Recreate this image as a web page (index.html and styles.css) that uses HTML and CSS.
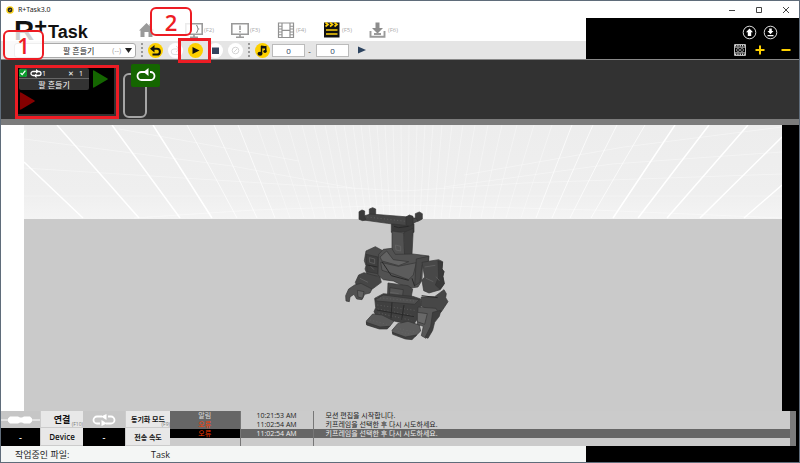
FILE: index.html
```html
<!DOCTYPE html>
<html lang="ko">
<head>
    <meta charset="UTF-8">
    <meta name="viewport" content="width=device-width, initial-scale=1.0">
    <title>R+Task3.0</title>
    <link rel="stylesheet" href="styles.css">
</head>
<body>
    <div class="window">
        <div class="titlebar">
            <svg class="app-icon" width="8" height="8" viewBox="0 0 8 8"><circle cx="4" cy="4" r="3.8" fill="#f5cf1b"/><circle cx="4" cy="4" r="2.4" fill="#222"/><path d="M3 4.5l2-1" stroke="#f5cf1b" stroke-width=".8"/></svg>
            <span class="app-title">R+Task3.0</span>
            <button class="win-btn" aria-label="Minimize"><svg width="8" height="8" viewBox="0 0 8 8"><path d="M1 4.5h6"/></svg></button>
            <button class="win-btn" aria-label="Maximize"><svg width="8" height="8" viewBox="0 0 8 8"><path d="M1.500 1.500h5v5h-5z"/></svg></button>
            <button class="win-btn" aria-label="Close"><svg width="8" height="8" viewBox="0 0 8 8"><path d="M1 1l6 6M7 1l-6 6"/></svg></button>
        </div>

        <div class="header">
            <div class="header-main">
                <div class="nav">
                    <div class="logo"><span class="logo-r">R</span><span class="logo-plus">+</span><span class="logo-task">Task</span></div>
                    <button class="nav-btn" aria-label="Home"><svg width="18" height="16" viewBox="0 0 18 16"><path d="M0 8.500L7.500 1l3 3V2h2v4l3 2.500h-2V15H9.500v-5h-4v5h-4V8.500z" fill="#9a9a9a"/></svg></button>
                    <button class="nav-btn"><svg width="18" height="16" viewBox="0 0 18 16"><path d="M.8 1.800h16.400v10.400H.8zM5 15.200h8M9 12v3" fill="none" stroke="#9a9a9a" stroke-width="1.600"/><path d="M11 3.500q1.500 0 1.500 1.500t1 2q-1 .5-1 2T11 10.500" fill="none" stroke="#8d8d8d" stroke-width="1.100"/></svg><span>(F2)</span></button>
                    <button class="nav-btn"><svg width="18" height="16" viewBox="0 0 18 16"><path d="M.8 1.800h16.400v10.400H.8zM5 15.200h8M9 12v3" fill="none" stroke="#9a9a9a" stroke-width="1.600"/><path d="M9 3.500v4.500M9 9v1.500" stroke="#8d8d8d" stroke-width="1.400"/></svg><span>(F3)</span></button>
                    <button class="nav-btn"><svg width="18" height="16" viewBox="0 0 18 16"><path d="M1.500 1h15v14.500h-15zM5 1v14.500M13 1v14.500M5 8.300h8" fill="none" stroke="#929292" stroke-width="1.200"/><path d="M1.500 4.200H5M1.500 7H5M1.500 10H5M1.500 12.800H5M13 4.200h3.500M13 7h3.500M13 10h3.500M13 12.800h3.500" stroke="#929292" stroke-width="1.100"/></svg><span>(F4)</span></button>
                    <button class="nav-btn"><svg width="18" height="16" viewBox="0 0 18 16"><path d="M1 .5h15.500V15.500H1z" fill="#111"/><path d="M2.500 .5l2.500 2-2.500 2M7 .5l2.500 2-2.500 2M11.500 .5l2.500 2-2.500 2M3 8h11.500M3 12h11.500" fill="none" stroke="#fdcf0a" stroke-width="1.700"/></svg><span>(F5)</span></button>
                    <button class="nav-btn"><svg width="18" height="16" viewBox="0 0 18 16"><path d="M6.500 .5h4V6h3.500l-5.500 5.500L3 6h3.500z" fill="#8d8d8d"/><path d="M1.500 9v5.700h14V9M5 12h7" fill="none" stroke="#9a9a9a" stroke-width="1.900"/></svg><span>(F6)</span></button>
                </div>
                <div class="toolbar">
                    <div class="motion-select">
                        <select aria-label="모션">
                            <option>팔 흔들기</option>
                        </select>
                        <span class="motion-key">(--)</span>
                        <svg width="7" height="5" viewBox="0 0 7 5"><path d="M0 0h7L3.500 5z" fill="#222"/></svg>
                    </div>
                    <span class="separator"></span>
                    <div class="tools">
                        <button class="tool active" aria-label="Undo"><svg width="13" height="13" viewBox="0 0 13 13"><path d="M5.500 1L1 4.700l4.500 3.700V5.800H8a1.900 1.900 0 010 3.800H3.500v2H8A3.900 3.900 0 008 3.800H5.500z" fill="#111"/></svg></button>
                        <button class="tool" aria-label="Redo"><svg width="13" height="13" viewBox="0 0 13 13"><path d="M7 2l3.500 3L7 8M10 5H5a2.500 2.500 0 000 5.500h4" fill="none" stroke="#ddd"/></svg></button>
                        <button class="tool active" aria-label="Play"><svg width="13" height="13" viewBox="0 0 13 13"><path d="M3.500 3l7 3.500-7 3.500z" fill="#111"/></svg></button>
                        <button class="tool" aria-label="Stop"><svg width="13" height="13" viewBox="0 0 13 13"><path d="M3 3.500h7v6.500H3z" fill="#35455f"/></svg></button>
                        <button class="tool" aria-label="Clear"><svg width="13" height="13" viewBox="0 0 13 13"><circle cx="6.500" cy="6.500" r="3.300" fill="none" stroke="#d4d4d4"/><path d="M5 8l3-3" stroke="#d4d4d4"/></svg></button>
                    </div>
                    <span class="separator"></span>
                    <button class="tool active" aria-label="Music"><svg width="13" height="13" viewBox="0 0 13 13"><path d="M5.500 9.500V2" fill="none" stroke="#111" stroke-width="1.500"/><path d="M5 1.500q3 .8 5.500.3V7.500H9V4.500q-2 .3-3.500-.2z" fill="#111"/><ellipse cx="4" cy="9.700" rx="2.500" ry="2" fill="#111"/><ellipse cx="9" cy="7.500" rx="1.700" ry="1.400" fill="#111"/></svg></button>
                    <input class="range-input" type="text" value="0" aria-label="Start">
                    <span class="dash">-</span>
                    <input class="range-input" type="text" value="0" aria-label="End">
                    <button class="tool plain" aria-label="Play music"><svg width="8" height="8" viewBox="0 0 8 8"><path d="M0 .5L8 4 0 7.500z" fill="#2d4460"/></svg></button>
                </div>
            </div>
            <div class="header-side">
                <div class="side-row side-top">
                    <button class="side-btn" aria-label="Upload"><svg width="15" height="15" viewBox="0 0 15 15"><circle cx="7.500" cy="7.500" r="6.300" fill="none" stroke="#ddd"/><path d="M7.500 3.500L11 7.300H9.200V11H5.800V7.300H4z" fill="#fff"/></svg></button>
                    <button class="side-btn" aria-label="Download"><svg width="15" height="15" viewBox="0 0 15 15"><circle cx="7.500" cy="7.500" r="6.300" fill="none" stroke="#ddd"/><path d="M6.200 3.500h2.600V6h1.700l-3 3.200-3-3.200h1.700zM4.500 10h6v1.200h-6z" fill="#fff"/></svg></button>
                </div>
                <div class="side-row side-bottom">
                    <button class="side-btn" aria-label="Frames"><svg width="12" height="12" viewBox="0 0 12 12"><path d="M.5 .5h11v11H.5zM.5 3.200h11M.5 8.800h11" fill="none" stroke="#bbb"/><path d="M1 1.800h10M1 10.200h10" stroke="#ddd" stroke-width="1.500" stroke-dasharray="1.300 1"/><circle cx="4" cy="6" r="1.500" fill="none" stroke="#aaa" stroke-width=".8"/><circle cx="8" cy="6" r="1.500" fill="none" stroke="#aaa" stroke-width=".8"/></svg></button>
                    <button class="side-btn" aria-label="Add"><svg width="10" height="10" viewBox="0 0 10 10"><path d="M5 .5v9M.5 5h9" stroke="#fdd000" stroke-width="2"/></svg></button>
                    <button class="side-btn" aria-label="Remove"><svg width="10" height="10" viewBox="0 0 10 10"><path d="M.5 5h9" stroke="#fdd000" stroke-width="2"/></svg></button>
                </div>
            </div>
        </div>

        <div class="timeline">
            <div class="card">
                <div class="card-info">
                    <div class="card-row">
                        <input type="checkbox" id="use-motion" checked>
                        <svg width="12" height="9" viewBox="0 0 12 9"><path d="M4 6.500H3a2 2 0 010-4h5M8 2.500h1a2 2 0 010 4H5" fill="none" stroke="#fff" stroke-width="1.300"/><path d="M6 0l3 2.500L6 4.500zM6.500 4.500l-3 2 3 2.500z" fill="#fff"/></svg>
                        <span>1</span>
                        <span class="times">✕</span>
                        <span class="count">1</span>
                    </div>
                    <label class="card-title" for="use-motion">팔 흔들기</label>
                </div>
                <svg class="play-green" width="15" height="18" viewBox="0 0 15 18"><path d="M0 1q0-1 1-.6L14.500 8.500q.7.500 0 1L1 17.600Q0 18 0 17z" fill="#146600"/></svg>
                <svg class="play-red" width="15" height="18" viewBox="0 0 15 18"><path d="M0 1q0-1 1-.6L14.500 8.500q.7.500 0 1L1 17.600Q0 18 0 17z" fill="#850000"/></svg>
            </div>
            <div class="loop">
                <button class="loop-btn" aria-label="Loop"><svg width="20" height="16" viewBox="0 0 20 16"><path d="M9 4H5.500a4 4 0 000 8h9a4 4 0 000-8H14" fill="none" stroke="#fff" stroke-width="1.800"/><path d="M12.500 0v8L7.500 4z" fill="#fff"/></svg></button>
            </div>
        </div>
        <div class="splitter"></div>

        <div class="stage">
            <svg class="scene" viewBox="0 0 758 286" preserveAspectRatio="xMidYMin slice">
                <defs>
                    <linearGradient id="wall" x1="0" y1="0" x2="0" y2="1">
                        <stop offset="0" stop-color="#ededed"/>
                        <stop offset=".75" stop-color="#efefef"/>
                        <stop offset="1" stop-color="#f4f4f4"/>
                    </linearGradient>
                </defs>
                <rect width="758" height="286" fill="#cacaca"/>
                <rect width="758" height="94" fill="url(#wall)"/>
                <!-- wall grid -->
                <g fill="none" stroke="#fff">
                    <path stroke-width="1.500" d="M0 37L59 93M33 0l82 93M88 0l68 93M129 0l59 93M758 12l-82 81M758 60l-38 33M724 0l-81 93M685 0l-71 93M651 0l-62 93"/>
                    <path stroke-opacity=".7" d="M163 0l50 93M190 0l43 93M214 0l37 93M621 0l-54 93M593 0l-47 93M569 0l-41 93M548 0l-36 93"/>
                    <path stroke-opacity=".35" d="M233 0l33 93M249 0l31 93M264 0l27 93M278 0l24 93M290 0l22 93M301 0l19 93M311 0l17 93M320 0l15 93M329 0l13 93M337 0l11 93M345 0l9 93M353 0l7 93M361 0l5 93M369 0l3 93M377 0l1 93M385 0l-1 93M393 0l-3 93M401 0l-5 93M409 0l-7 93M418 0l-8 93M428 0l-11 93M439 0l-14 93M451 0l-16 93M464 0l-18 93M478 0l-21 93M493 0l-24 93M510 0l-28 93M528 0l-31 93"/>
                    <path stroke-opacity=".35" d="M0 14l208 27 120 22M95 4l180 32M0 43l270 17 110 6M0 71h758M110 93l120-8 150-5 190 5 188 8M758 27L588 39 420 62M758 49L500 58 380 66M758 2L600 22 440 50"/>
                </g>
                <!-- robot -->
                <g transform="translate(306 70) scale(.3333)" stroke="#343434" stroke-width="2" stroke-linejoin="round">
                    <!-- head plate -->
                    <path fill="#3a3a3a" d="M184 86H252V112H184z"/>
                    <path fill="#3f3f3f" d="M118 60V42L128 38 137 42V62zM256 74V56L268 51 277 56V72L264 79z"/>
                    <path fill="#474747" d="M104 62L122 57 236 66 258 70 264 78 246 86 232 92 172 85 100 75z"/>
                    <path fill="#3a3a3a" d="M87 73V50L96 45 104 48V66L108 74 98 77zM228 90V66L238 60 249 64V88L238 94z"/>
                    <!-- neck -->
                    <path fill="#525252" d="M186 108L222 114 224 190 210 197 186 182z"/>
                    <path fill="#404040" d="M222 112L250 100 246 178 224 192z"/>
                    <!-- left arm -->
                    <path fill="#4c4c4c" d="M108 168L136 155 160 168 150 244 114 244 105 222 108 212 103 197z"/>
                    <path fill="#3f3f3f" d="M108 178L144 186 143 236 111 230z"/>
                    <!-- torso -->
                    <path fill="#525252" d="M146 178L160 163 185 160 196 178 248 177 297 183 296 198 278 206 276 256 264 276 236 280 190 258 160 254 144 240z"/>
                    <path fill="#5c5c5c" d="M152 202L205 214 259 203 250 240 236 254 188 236 156 226z"/>
                    <path fill="#494949" d="M259 192L295 184V200L276 210 270 262 254 272z"/>
                    <path fill="#636363" d="M150 186L170 168 190 194 236 200 206 212 156 198z"/>
                    <!-- right arm -->
                    <path fill="#484848" d="M276 202L326 194 338 200 336 222 342 230 339 244 343 266 331 284 297 294 281 287 276 256 284 246z"/>
                    <path fill="#393939" d="M324 198L338 202 336 222 342 230 338 244 343 266 330 282 316 270 326 246z"/>
                    <!-- left hand -->
                    <path fill="#464646" d="M86 240L102 233 150 246 154 262 130 280 106 292 82 278 76 262z"/>
                    <path fill="#515151" d="M74 270L93 265 126 282 120 294 104 298 96 314 80 312 72 298 60 306 58 320 48 318 47 302 56 282z"/>
                    <path fill="#626262" d="M82 286L102 290 98 310 84 306z"/>
                    <!-- waist -->
                    <path fill="#474747" d="M174 264L234 272 248 282 240 326 172 316z"/>
                    <path fill="#555" d="M180 278L220 284 216 319 178 312z"/>
                    <path fill="#404040" d="M134 310L160 296 248 304 272 312V358L250 390 200 380 138 362 132 350 137 338z"/>
                    <path fill="#505050" d="M136 314L160 300 268 314 254 328 140 318z"/>
                    <!-- feet -->
                    <path fill="#575757" d="M109 378L128 357 156 360 192 378 178 396 150 400 110 388z"/>
                    <path fill="#5c5c5c" d="M186 406L203 386 234 379 268 390 272 408 256 424 226 430 188 414z"/>
                    <path fill="#404040" d="M187 412L226 426 260 420 246 434 226 432 188 418zM109 382L150 396 178 394 172 402 148 402 110 390z"/>
                    <!-- right leg and hand -->
                    <path fill="#474747" d="M274 306L314 305 342 284 349 296 347 308 354 320 333 352 300 348 272 332z"/>
                    <path fill="#575757" d="M264 336L318 340 328 358 312 370 304 410 288 430 274 422 280 394 262 388z"/>
                    <path fill="#3e3e3e" d="M308 352L333 346 328 364 314 382 308 406 294 430 286 426 302 394z"/>
                    <path fill="#686868" d="M262 352L292 356 284 388 262 380z"/>
                </g>
                <!-- joints and bolts -->
                <g transform="translate(306 70) scale(.3333)" fill="none" stroke="#686868" stroke-width="2">
                    <path d="M196 150l16 4v14l-14-3zM118 188l16 4v14l-15-4zM122 214l10 10M284 216l32-5M288 250l22 10M318 245l10 12M90 250l24 12M180 292l26 4"/>
                    <path stroke-dasharray="3 7" d="M142 330l112 16M143 342l108 20M146 354l98 22M120 375l50 13M200 400l58 12M205 410l48 10M112 66l116 13M140 308l112 10"/>
                    <path stroke="#292929" stroke-width="3" d="M186 322l-3 48M222 330l-7 44M140 345l112 20M156 200l28 42 52 14M246 250l8 24M112 210l30 6M275 302l48 6M192 94l14 4 30-4"/>
                </g>
            </svg>
        </div>

        <div class="status">
            <div class="device">
                <button class="cell icon-cell" aria-label="연결 상태"><svg width="39" height="10" viewBox="0 0 39 10"><path d="M0 5h39" stroke="#fff"/><path d="M9 1.500h8l2 1h2l2-1h6l2 2v3l-2 2h-6l-2-1h-2l-2 1H9l-2-2v-3z" fill="#fff"/></svg></button>
                <button class="cell">연결<small>(F10)</small></button>
                <button class="cell icon-cell" aria-label="동기화"><svg width="26" height="12" viewBox="0 0 26 12"><path d="M9 9.500H6A3.500 3.500 0 016 2.500h5M17 2.500h3a3.500 3.500 0 010 7h-5" fill="none" stroke="#fff" stroke-width="1.800"/><path d="M15.500 0v6L10 2.500zM10.500 6v6l5.500-2.500z" fill="#fff"/></svg></button>
                <button class="cell small">동기화 모드<small>(F9)</small></button>
                <span class="cell value">-</span>
                <span class="cell device-name">Device</span>
                <span class="cell value">-</span>
                <span class="cell small">전송 속도</span>
            </div>
            <table class="log">
                <tr><td class="kind">알림</td><td class="time">10:21:53 AM</td><td>모션 편집을 시작합니다.</td></tr>
                <tr><td class="kind error">오류</td><td class="time">11:02:54 AM</td><td>키프레임을 선택한 후 다시 시도하세요.</td></tr>
                <tr class="selected"><td class="kind error">오류</td><td class="time">11:02:54 AM</td><td>키프레임을 선택한 후 다시 시도하세요.</td></tr>
                <tr><td></td><td class="time"></td><td></td></tr>
            </table>
            <div class="log-scroll"></div>
        </div>

        <div class="footer">
            <div class="footer-main"><span class="file-label">작업중인 파일:</span><span>Task</span></div>
        </div>

        <!-- numbered callouts -->
        <div class="mark mark-card"></div>
        <div class="mark mark-play"></div>
        <div class="callout callout-1">1</div>
        <div class="callout callout-2">2</div>
    </div>
</body>
</html>
```

FILE: styles.css
```css
* {
    box-sizing: border-box;
}

body {
    margin: 0;
    background-color: #000;
    color: #222;
    font-family: "Open Sans", "Noto Sans CJK KR", sans-serif;
    font-size: 8px;
}

button, input, select {
    margin: 0;
    padding: 0;
    border: none;
    background: none;
    color: inherit;
    font: inherit;
}

svg {
    display: block;
    flex: none;
}

.window {
    position: relative;
    display: flex;
    flex-direction: column;
    height: 100vh;
    min-height: 300px;
    border: 1px solid #5f6c7a;
    overflow: hidden;
}

/* title bar */
.titlebar {
    display: flex;
    align-items: center;
    height: 17px;
    padding: 0 0 0 5px;
    background-color: #fff;
}

.app-title {
    flex: 1;
    margin-left: 4px;
    font-family: "Noto Sans", sans-serif;
    font-size: 7px;
}

.win-btn {
    display: flex;
    justify-content: center;
    width: 27px;
}

.win-btn svg {
    fill: none;
    stroke: #444;
}

/* header */
.header {
    display: flex;
    height: 42px;
    border-bottom: 1px solid #888;
    background-color: #000;
}

.header-main {
    flex: 1;
    background-color: #fff;
}

.nav {
    display: flex;
    align-items: center;
    height: 23px;
    padding-left: 13px;
}

.logo {
    display: flex;
    width: 125px;
    height: 23px;
    align-items: flex-start;
    color: #111;
    font-family: "Liberation Sans", sans-serif;
    font-weight: bold;
}

.logo-r {
    font-size: 28px;
    line-height: 26px;
}

.logo-plus {
    font-size: 22px;
    line-height: 18px;
}

.logo-task {
    margin-left: 1px;
    font-size: 18px;
    line-height: 28px;
}

.nav-btn {
    display: flex;
    align-items: center;
    gap: 1px;
    width: 46px;
    color: #aaa;
    font-size: 6px;
}

.toolbar {
    display: flex;
    align-items: center;
    height: 18px;
    padding-left: 13px;
    background-color: #e5e5e5;
}

.motion-select {
    display: flex;
    align-items: center;
    width: 122px;
    height: 15px;
    padding-right: 3px;
    border: 1px solid #aaa;
    border-radius: 3px;
    background-color: #fff;
}

.motion-select select {
    flex: 1;
    padding-left: 30px;
    appearance: none;
    text-align: center;
}

.motion-key {
    margin-right: 4px;
    color: #999;
    font-size: 7px;
}

.separator {
    height: 14px;
    margin: 0 5px;
    border-left: 2px dotted #999;
}

.tools {
    display: flex;
    gap: 5px;
}

.tool {
    display: flex;
    align-items: center;
    justify-content: center;
    width: 15px;
    height: 15px;
    border-radius: 50%;
    background-color: #fff;
}

.tool.active {
    background-color: #fdd000;
}

.tool.plain {
    margin-left: 5px;
    background: none;
}

.range-input {
    width: 33px;
    height: 13px;
    margin-left: 2px;
    border: 1px solid #bbb;
    background-color: #fff;
    color: #2d4460;
    text-align: center;
}

.dash {
    width: 9px;
    text-align: center;
}

.header-side {
    display: flex;
    flex-direction: column;
    width: 213px;
    padding-top: 5px;
}

.side-row {
    display: flex;
    align-items: center;
    justify-content: flex-end;
    height: 18px;
}

.side-top {
    gap: 6px;
    padding-right: 21px;
}

.side-bottom {
    gap: 9px;
    padding-right: 8px;
}

.side-bottom .side-btn:last-child {
    margin-left: 7px;
}

/* timeline */
.timeline {
    display: flex;
    height: 59px;
    padding: 4px 16px;
    background-color: #323232;
}

.card {
    display: grid;
    grid-template-columns: 70px 1fr;
    grid-template-rows: 24px 1fr;
    width: 97px;
    height: 47px;
    margin-top: 3px;
    padding: 1px 2px;
    background-color: #000;
}

.card-info {
    height: 22px;
    border-radius: 2px;
    background-color: #333;
    color: #fff;
}

.card-row {
    display: flex;
    align-items: center;
    height: 11px;
    border-bottom: 1px solid #666;
    font-size: 7px;
}

.card-row input {
    width: 8px;
    height: 8px;
    margin-right: 3px;
    accent-color: #0a9b2c;
}

.times {
    margin-left: auto;
}

.count {
    margin: 0 6px 0 5px;
}

.card-title {
    display: block;
    line-height: 11px;
    text-align: center;
}

.play-green {
    margin: 2px 0 0 4px;
}

.play-red {
    margin-left: 1px;
}

.loop {
    position: relative;
    width: 24px;
    height: 45px;
    margin: 9px 0 0 9px;
    border: 2px solid #a5a5a5;
    border-radius: 6px;
}

.loop-btn {
    position: absolute;
    top: -11px;
    left: 6px;
    display: flex;
    align-items: center;
    justify-content: center;
    width: 29px;
    height: 23px;
    border-radius: 2px;
    background-color: #146600;
}

.splitter {
    height: 6px;
    background-color: #7b7b7b;
}

/* 3D view */
.stage {
    flex: 1;
    min-height: 0;
    padding: 0 17px 0 23px;
    background: linear-gradient(to right, #fff 50%, #000 50%);
}

.scene {
    width: 100%;
    height: 100%;
}

/* status panel */
.status {
    display: flex;
    height: 35px;
    padding-right: 3px;
}

.device {
    display: grid;
    grid-template-columns: 39px 43px 42px 45px;
    grid-template-rows: 17px 18px;
    background-color: #ccc;
}

.cell {
    position: relative;
    display: flex;
    align-items: center;
    justify-content: center;
    margin: 0 0 1px 1px;
    background-color: #e8e8e8;
    color: #111;
    font-size: 9px;
    font-weight: 600;
}

.cell.small {
    font-size: 7px;
}

.device-name {
    font-size: 8px;
}

.cell small {
    position: absolute;
    right: 0;
    bottom: 0;
    color: #777;
    font-size: 5px;
    font-weight: normal;
    line-height: 5px;
}

.icon-cell {
    margin: 0;
    background-color: #c6c6c6;
}

.value {
    margin: 0;
    background-color: #000;
    color: #fff;
}

.log {
    flex: 1;
    height: 35px;
    border-collapse: collapse;
    table-layout: fixed;
    background-color: #cbcbcb;
    font-size: 7px;
    line-height: 8px;
}

.log td {
    height: 9px;
    padding: 0 0 0 12px;
    white-space: nowrap;
}

.log td:first-child {
    width: 70px;
    padding: 0;
    text-align: center;
}

.log .kind {
    background-color: #666;
    color: #ddd;
}

.log .error {
    color: #ff3c00;
}

.log .time {
    width: 73px;
    padding: 0;
    border: solid #777;
    border-width: 0 1px;
    text-align: center;
}

.log .selected {
    background-color: #666;
    color: #eee;
}

.log .selected .kind {
    background-color: #000;
}

.log-scroll {
    width: 6px;
    background-color: #7b7b7b;
}

.footer {
    height: 16px;
    padding-right: 213px;
    background-color: #000;
}

.footer-main {
    display: flex;
    align-items: center;
    height: 16px;
    padding-left: 14px;
    background-color: #f4f6f5;
    font-size: 9px;
}

.file-label {
    width: 136px;
}

/* callouts */
.mark {
    position: absolute;
    border: 3px solid #ed1c24;
}

.mark-card {
    top: 64px;
    left: 14px;
    width: 104px;
    height: 54px;
}

.mark-play {
    top: 37px;
    left: 177px;
    width: 33px;
    height: 25px;
}

.callout {
    position: absolute;
    display: flex;
    align-items: center;
    justify-content: center;
    border: 2px solid #ed1c24;
    border-radius: 6px;
    background-color: rgba(255, 255, 255, 0.8);
    color: #ed1c24;
    font-size: 22px;
    font-weight: 600;
    line-height: 22px;
}

.callout-1 {
    top: 29px;
    left: 2px;
    width: 41px;
    height: 30px;
}

.callout-2 {
    top: 6px;
    left: 149px;
    width: 42px;
    height: 29px;
}
```
